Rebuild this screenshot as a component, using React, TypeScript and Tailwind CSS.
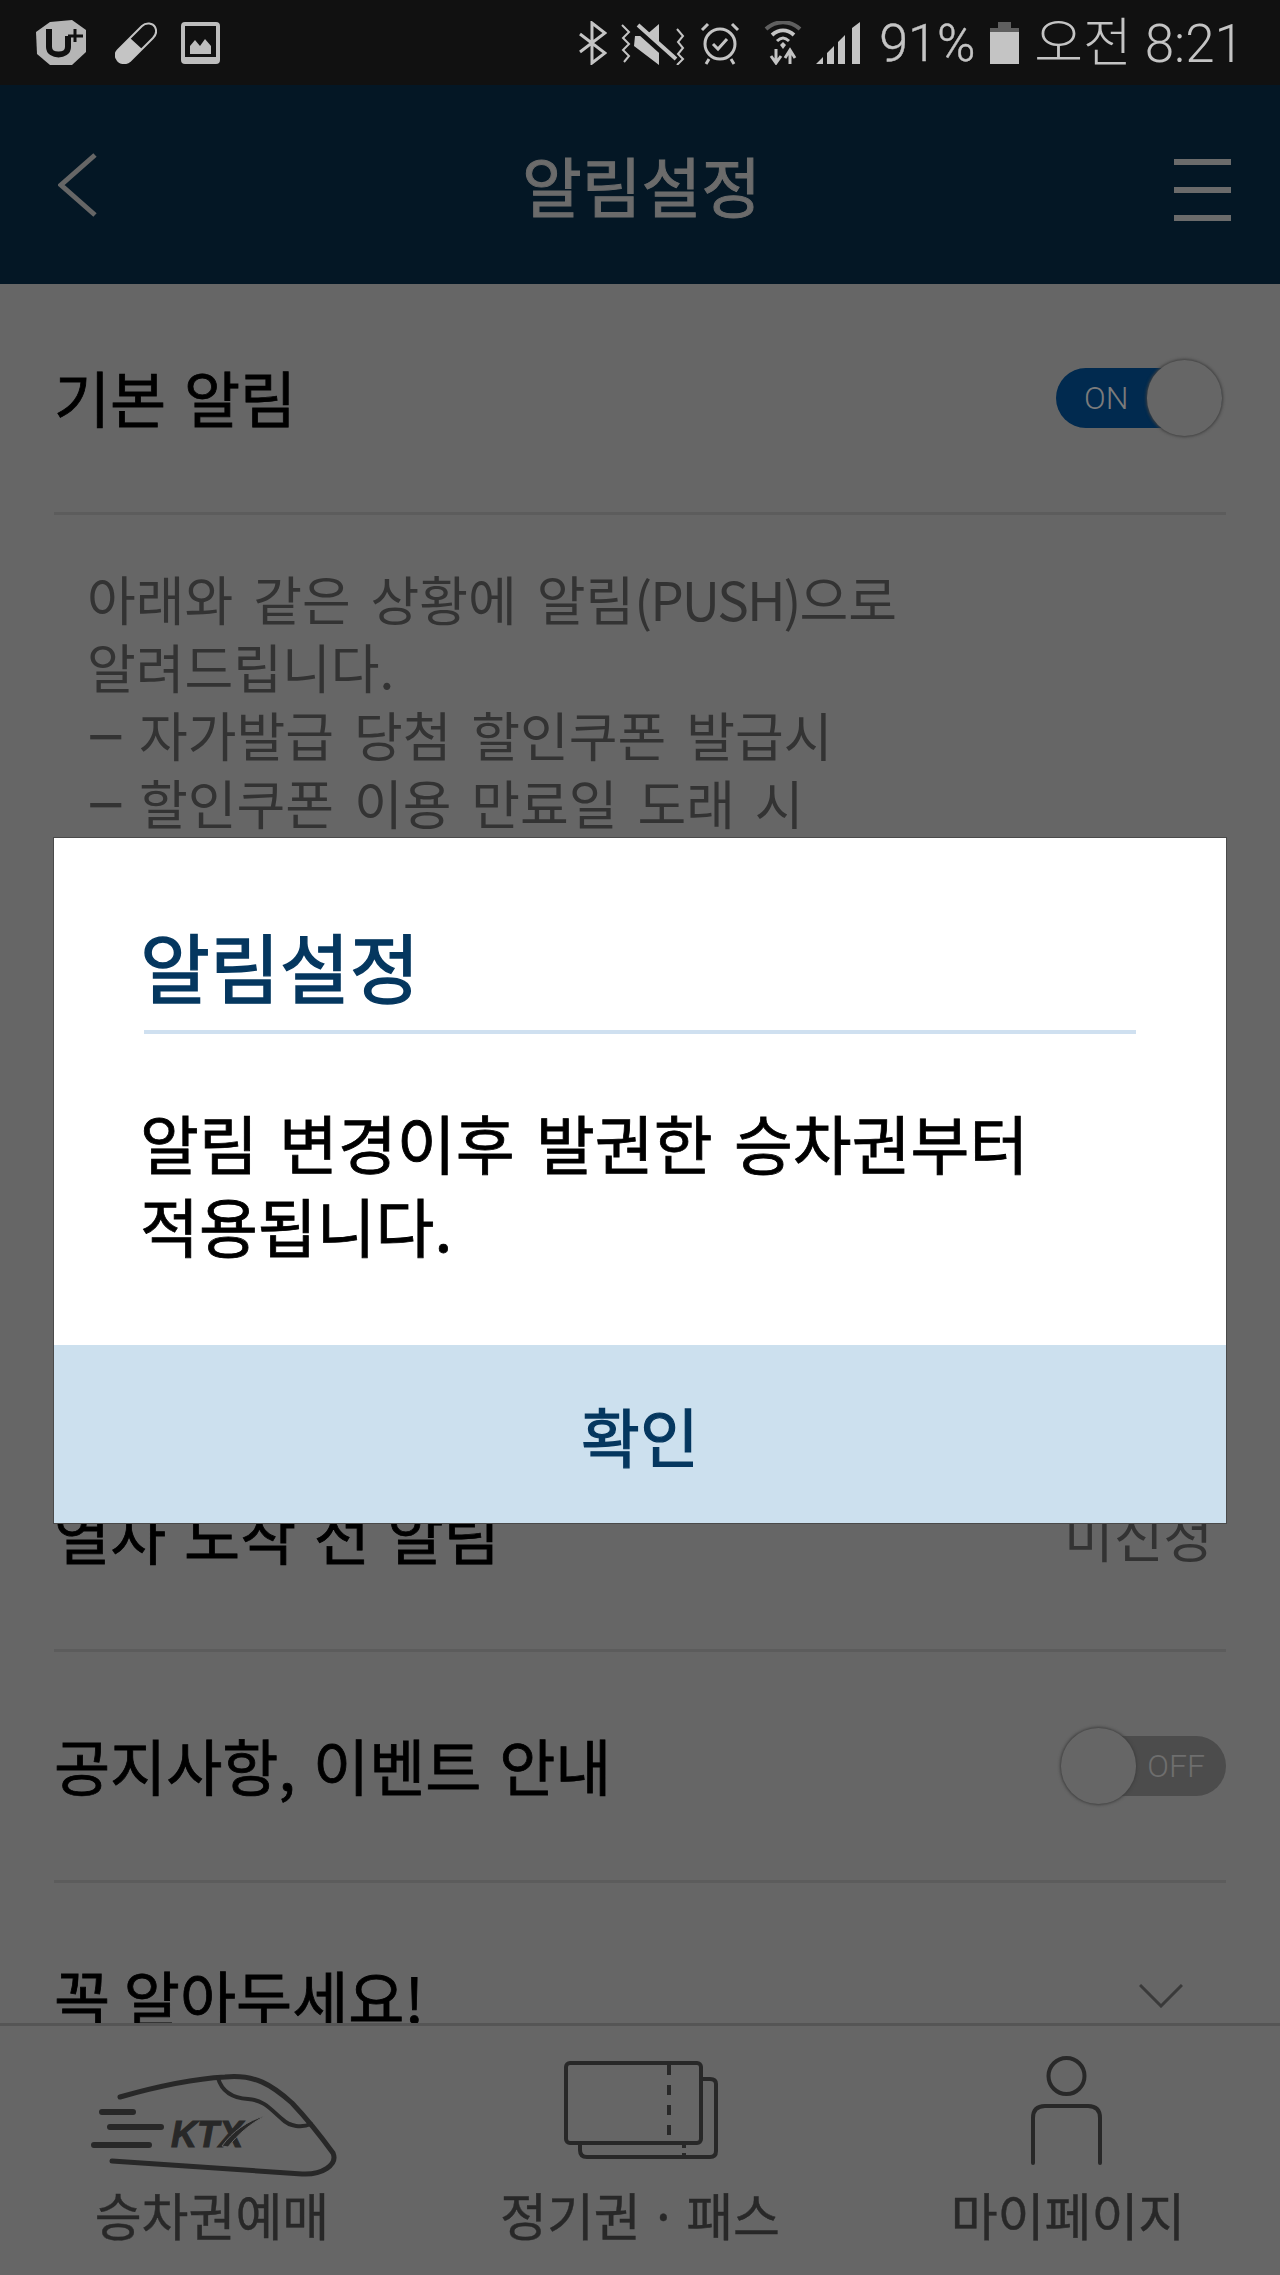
const cjk = "font-['Noto_Sans_CJK_KR',sans-serif]"

function StatusLeft() {
  return (
    <div className="flex items-center">
      {/* carrier badge */}
      <svg width="50" height="46" viewBox="0 0 50 46" className="ml-[36px]">
        <path d="M14 2 L36 0 L50 10 L50 32 L36 45 L14 45 L1 34 L0 12 Z" fill="#b5b5b5" />
        <path d="M13 9 V27 C13 37 32 37 32 27 V16" fill="none" stroke="#111" strokeWidth="6" />
        <path d="M32 16 H47 M39 9 V22" stroke="#111" strokeWidth="3" />
      </svg>
      <svg width="42" height="42" viewBox="0 0 42 42" className="ml-[29px]">
        <path d="M3 28 L27 4 C31 0 38 1 40 5 C42 9 41 13 38 16 L15 39 C10 43 4 41 2 37 C0 34 0 31 3 28 Z" fill="none" stroke="#c4c4c4" strokeWidth="2" />
        <path d="M3 28 L15 16 L27 27 L15 39 C10 43 4 41 2 37 C0 34 0 31 3 28 Z" fill="#c4c4c4" />
      </svg>
      <svg width="39" height="42" viewBox="0 0 39 42" className="ml-[24px]">
        <rect x="2" y="2" width="35" height="38" rx="2" fill="none" stroke="#bdbdbd" strokeWidth="4" />
        <rect x="2" y="35" width="35" height="5" fill="#bdbdbd" />
        <path d="M9 32 V24 L14 18 L19 24 L24 17 L30 24 V32 Z" fill="#bdbdbd" />
      </svg>
    </div>
  )
}

function StatusRight() {
  return (
    <div className="flex items-center text-[#c4c4c4]">
      <svg width="28" height="44" viewBox="0 0 28 44" className="mr-[13px]">
        <path d="M1 13 L26 32 L13 42 V2 L26 12 L1 31" fill="none" stroke="#c4c4c4" strokeWidth="3" />
      </svg>
      <svg width="66" height="44" viewBox="0 0 66 44" className="mr-[14px]">
        <path d="M2 4 L9 11 L3 17 L9 23 L3 29 L9 35 L4 41" fill="none" stroke="#c4c4c4" strokeWidth="2" />
        <path d="M57 8 L63 15 L58 21 L63 27 L58 33 L63 38 L57 44" fill="none" stroke="#c4c4c4" strokeWidth="2" />
        <path d="M15 15 H25 L39 3 V44 L14 25 Z" fill="#c4c4c4" />
        <path d="M14 4 L54 40" stroke="#111" strokeWidth="8" />
        <path d="M18 4 L56 38" stroke="#c4c4c4" strokeWidth="4" />
      </svg>
      <svg width="40" height="44" viewBox="0 0 40 44" className="mr-[24px]">
        <circle cx="20" cy="23" r="15" fill="none" stroke="#c4c4c4" strokeWidth="3" />
        <path d="M13 23 L18 28 L27 18" fill="none" stroke="#c4c4c4" strokeWidth="3" />
        <path d="M2 9 L8 3 M38 9 L32 3 M9 38 L6 43 M31 38 L34 43" stroke="#c4c4c4" strokeWidth="3" />
      </svg>
      <svg width="38" height="44" viewBox="0 0 38 44" className="mr-[14px]">
        <path d="M2 8 C12 -1 26 -1 36 8" fill="none" stroke="#5f5f5f" strokeWidth="4" />
        <path d="M8 14 C15 8 23 8 30 14" fill="none" stroke="#c4c4c4" strokeWidth="4" />
        <path d="M13 20 C17 16 21 16 25 20" fill="none" stroke="#c4c4c4" strokeWidth="3" />
        <path d="M16 24 L19 21 L22 24 L19 28 Z" fill="#c4c4c4" />
        <path d="M12 28 V40 M7 35 L12 42 L17 35 M26 43 V31 M21 37 L26 29 L31 37" fill="none" stroke="#c4c4c4" strokeWidth="3" />
      </svg>
      <svg width="44" height="42" viewBox="0 0 44 42" className="mr-[19px]">
        <path d="M0 42 L7 35 V42 Z M11 31 L18 24 V42 H11 Z M22 20 L29 13 V42 H22 Z M36 6 L44 0 V42 H36 Z" fill="#c4c4c4" />
      </svg>
      <span className="font-['Roboto',sans-serif] font-light text-[52px] leading-none w-[111px] pt-[3px] [-webkit-text-stroke:0.4px_#c4c4c4]">91%</span>
      <svg width="29" height="42" viewBox="0 0 29 42" className="mr-[15px]">
        <path d="M8 0 H21 V6 H29 V42 H0 V6 H8 Z" fill="#5f5f5f" />
        <rect x="0" y="10" width="29" height="32" fill="#c4c4c4" />
      </svg>
      <span className="font-['Roboto','Noto_Sans_CJK_KR',sans-serif] font-light text-[53px] leading-none mr-[36px] pt-[3px] whitespace-nowrap">오전 8:21</span>
    </div>
  )
}

function Toggle({ on }: { on: boolean }) {
  return (
    <div className="relative w-[170px] h-[76px] flex items-center justify-end">
      <div className={`h-[60px] rounded-full font-['Roboto',sans-serif] font-light text-[32px] flex items-center ${on ? 'w-[166px] bg-[#012a4f] text-[#7b7b7b] pl-[28px] mr-[4px]' : 'w-[160px] bg-[#4c4c4c] text-[#6e6e6e] justify-end pr-[21px]'}`}>
        {on ? 'ON' : 'OFF'}
      </div>
      <div className={`absolute top-0 w-[75px] h-[76px] rounded-full bg-[#666666] shadow-[0_0_3px_1px_#3f3f3f] ${on ? 'right-[4px]' : 'left-[5px]'}`} />
    </div>
  )
}

function KtxIcon() {
  return (
    <svg width="250" height="108" viewBox="90 2072 250 108" className="ml-[6px] -mb-[4px]">
      <g fill="none" stroke="#282828" strokeWidth="5" strokeLinecap="round">
        <path d="M120 2097 C155 2087 190 2079 225 2077 C255 2074 272 2085 292 2103 C310 2122 325 2142 333 2153 C338 2165 322 2175 302 2174 L112 2161" />
        <path d="M218 2078 C222 2092 232 2098 248 2099 C265 2100 272 2111 282 2119 C290 2127 302 2128 311 2124" strokeWidth="4" />
        <path d="M102 2112 H133 M110 2127 H161 M94 2145 H149" strokeWidth="6" />
      </g>
      <text x="171" y="2147" fontFamily="'Liberation Sans', sans-serif" fontSize="36" fontWeight="700" fontStyle="italic" fill="#282828" stroke="#282828" strokeWidth="1" textLength="72">KTX</text>
      <path d="M222 2146 C232 2132 248 2120 265 2116 C250 2124 238 2134 228 2147 Z" fill="#282828" stroke="#666666" strokeWidth="1" />
    </svg>
  )
}

function TicketIcon() {
  return (
    <svg width="156" height="100" viewBox="564 2061 156 100" className="ml-[4px] mb-[15px]">
      <g fill="none" stroke="#282828" strokeWidth="4" strokeLinejoin="round">
        <path d="M580 2143 V2150 Q580 2157 587 2157 H710 Q716 2157 716 2151 V2084 Q716 2079 710 2079 H702" />
        <rect x="566" y="2063" width="135" height="80" rx="4" />
        <path d="M669 2065 V2141" strokeDasharray="10 10" />
        <path d="M684 2145 V2155" strokeDasharray="3 5" />
      </g>
    </svg>
  )
}

function PersonIcon() {
  return (
    <svg width="72" height="112" viewBox="1030 2056 72 112" className="mr-[4px] mb-[8px]">
      <g fill="none" stroke="#282828" strokeWidth="4" strokeLinecap="round">
        <circle cx="1066.5" cy="2076" r="18" />
        <path d="M1033 2163 V2118 Q1033 2106 1045 2106 H1088 Q1100 2106 1100 2118 V2163" />
      </g>
    </svg>
  )
}

function Row({ label, right }: { label: string; right: React.ReactNode }) {
  return (
    <div className="h-[231px] shrink-0 flex items-center justify-between box-border border-b-[3px] border-[#5c5c5c]">
      <span className="mb-[4px] text-[61px] leading-none text-black [word-spacing:4px] [-webkit-text-stroke:0.8px_#000]">{label}</span>
      {right}
    </div>
  )
}

function NavItem({ icon, label, width }: { icon: React.ReactNode; label: string; width: string }) {
  return (
    <div className={`flex flex-col items-center ${width}`}>
      <div className="h-[150px] flex items-end justify-center">{icon}</div>
      <span className="mt-[10px] text-[51px] leading-[56px] text-[#282828] whitespace-nowrap [word-spacing:-3px] [-webkit-text-stroke:0.4px_#282828]">{label}</span>
    </div>
  )
}

export default function App() {
  return (
    <div className={`relative w-[1280px] h-[2275px] overflow-hidden bg-[#666666] flex flex-col ${cjk}`}>
      <div className="h-[85px] shrink-0 bg-[#111111] flex items-center justify-between">
        <StatusLeft />
        <StatusRight />
      </div>

      <div className="h-[199px] shrink-0 bg-[#041725] flex items-center justify-between pl-[58px] pr-[49px]">
        <svg width="40" height="66" viewBox="0 0 40 66">
          <path d="M37 3 L3 33 L37 63" fill="none" stroke="#666666" strokeWidth="5" />
        </svg>
        <h1 className="ml-[11px] text-[65px] leading-none text-[#6b6b6b] [-webkit-text-stroke:1px_#6b6b6b]">알림설정</h1>
        <div className="w-[57px] mt-[10px] flex flex-col gap-[22px]">
          <div className="h-[6px] bg-[#6b6b6b]" />
          <div className="h-[6px] bg-[#6b6b6b]" />
          <div className="h-[6px] bg-[#6b6b6b]" />
        </div>
      </div>

      <div className="flex-1 min-h-0 overflow-hidden px-[54px] flex flex-col">
        <Row label="기본 알림" right={<Toggle on />} />
        <div className="pt-[49px] pl-[33px] text-[53px] leading-[68px] text-[#333333] [word-spacing:8px] whitespace-nowrap shrink-0">
          <p>
            아래와 같은 상황에 알림<span className="tracking-[-2px]">(PUSH)</span>으로
          </p>
          <p>알려드립니다.</p>
          <p>
            <span className="inline-block w-[52px] text-[70px] leading-[50px]">–</span>자가발급 당첨 할인쿠폰 발급시
          </p>
          <p>
            <span className="inline-block w-[52px] text-[70px] leading-[50px]">–</span>할인쿠폰 이용 만료일 도래 시
          </p>
        </div>
        <div className="h-[585px] shrink-0" />
        <Row label="열차 도착 전 알림" right={<span className="text-[54px] leading-none text-[#333333] mr-[13px]">미신청</span>} />
        <Row label="공지사항, 이벤트 안내" right={<Toggle on={false} />} />
        <div className="h-[231px] shrink-0 flex items-center justify-between">
          <span className="mb-[4px] text-[61px] leading-none text-black [-webkit-text-stroke:0.8px_#000]">꼭 알아두세요!</span>
          <svg width="44" height="24" viewBox="0 0 44 24" className="mr-[43px] -mt-[6px]">
            <path d="M1 1 L22 22 L43 1" fill="none" stroke="#3a3a3a" strokeWidth="3" />
          </svg>
        </div>
      </div>

      <div className="h-[252px] shrink-0 bg-[#666666] border-t-[3px] border-[#555555] flex">
        <NavItem width="w-[424px]" label="승차권예매" icon={<KtxIcon />} />
        <NavItem width="w-[432px]" label="정기권 · 패스" icon={<TicketIcon />} />
        <NavItem width="w-[424px]" label="마이페이지" icon={<PersonIcon />} />
      </div>

      {/* dialog */}
      <div className="absolute left-[54px] top-[838px] w-[1172px] h-[685px] bg-white shadow-[0_0_0_1px_#4a4a4a] flex flex-col">
        <div className="flex-1 px-[90px]">
          <h2 className="-ml-[4px] mt-[81px] text-[76px] leading-[92px] text-[#05375f] [-webkit-text-stroke:1.4px_#05375f]">알림설정</h2>
          <div className="mt-[19px] h-[4px] bg-[#cfe0f0]" />
          <p className="-ml-[4px] mt-[66px] text-[64px] leading-[83px] text-black [word-spacing:7px] whitespace-nowrap [-webkit-text-stroke:0.8px_#000]">
            알림 변경이후 발권한 승차권부터
            <br />
            적용됩니다.
          </p>
        </div>
        <div className="h-[178px] shrink-0 bg-[#cce0ee] flex items-center justify-center text-[64px] leading-none text-[#05375f] [-webkit-text-stroke:1.2px_#05375f]">
          확인
        </div>
      </div>
    </div>
  )
}
